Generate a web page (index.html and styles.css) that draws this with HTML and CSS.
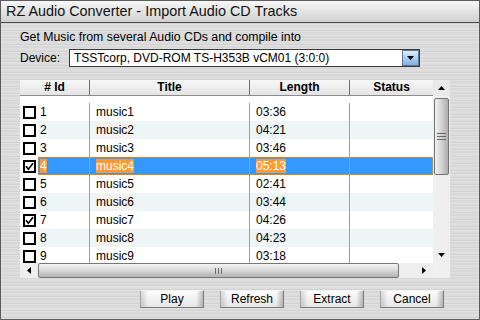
FILE: index.html
```html
<!DOCTYPE html>
<html lang="en">
<head>
    <meta charset="UTF-8">
    <title>RZ Audio Converter - Import Audio CD Tracks</title>
    <link rel="stylesheet" href="styles.css">
</head>
<body>
<div class="window">
    <div class="title_bar">RZ Audio Converter - Import Audio CD Tracks</div>
    <div class="content">
        <p class="intro">Get Music from several Audio CDs and compile into</p>
        <div class="device">
            <span class="device_label">Device:</span>
            <div class="combo">
                <span class="combo_text">TSSTcorp, DVD-ROM TS-H353B vCM01 (3:0:0)</span>
                <span class="combo_btn"><svg width="7" height="5" viewBox="0 0 7 5"><path d="M0 0h7l-3.5 4z" fill="#000"/></svg></span>
            </div>
        </div>

        <div class="track_table">
            <div class="list">
                <div class="thead">
                    <div class="th th_id"># Id</div>
                    <div class="th th_title">Title</div>
                    <div class="th th_len">Length</div>
                    <div class="th th_status">Status</div>
                </div>
                <div class="tbody">
                    <div class="row">
                        <div class="chk_cell"><span class="chk"></span></div>
                        <div class="cells"><div class="td td_id">1</div><div class="td td_title">music1</div><div class="td td_len">03:36</div><div class="td td_status"></div></div>
                    </div>
                    <div class="row alt">
                        <div class="chk_cell"><span class="chk"></span></div>
                        <div class="cells"><div class="td td_id">2</div><div class="td td_title"><span class="tint">music2</span></div><div class="td td_len">04:21</div><div class="td td_status"></div></div>
                    </div>
                    <div class="row">
                        <div class="chk_cell"><span class="chk"></span></div>
                        <div class="cells"><div class="td td_id">3</div><div class="td td_title">music3</div><div class="td td_len">03:46</div><div class="td td_status"></div></div>
                    </div>
                    <div class="row sel">
                        <div class="chk_cell"><span class="chk"><svg width="9" height="9" viewBox="0 0 9 9"><path d="M1 4.2l2.4 3 4.6-6" fill="none" stroke="#000" stroke-width="1.7"/></svg></span></div>
                        <div class="cells"><div class="td td_id"><span class="hl">4</span></div><div class="td td_title"><span class="hl">music4</span></div><div class="td td_len"><span class="hl">05:13</span></div><div class="td td_status"></div></div>
                    </div>
                    <div class="row">
                        <div class="chk_cell"><span class="chk"></span></div>
                        <div class="cells"><div class="td td_id">5</div><div class="td td_title">music5</div><div class="td td_len">02:41</div><div class="td td_status"></div></div>
                    </div>
                    <div class="row alt">
                        <div class="chk_cell"><span class="chk"></span></div>
                        <div class="cells"><div class="td td_id">6</div><div class="td td_title"><span class="tint">music6</span></div><div class="td td_len">03:44</div><div class="td td_status"></div></div>
                    </div>
                    <div class="row">
                        <div class="chk_cell"><span class="chk"><svg width="9" height="9" viewBox="0 0 9 9"><path d="M1 4.2l2.4 3 4.6-6" fill="none" stroke="#000" stroke-width="1.7"/></svg></span></div>
                        <div class="cells"><div class="td td_id">7</div><div class="td td_title">music7</div><div class="td td_len">04:26</div><div class="td td_status"></div></div>
                    </div>
                    <div class="row alt">
                        <div class="chk_cell"><span class="chk"></span></div>
                        <div class="cells"><div class="td td_id">8</div><div class="td td_title"><span class="tint">music8</span></div><div class="td td_len">04:23</div><div class="td td_status"></div></div>
                    </div>
                    <div class="row">
                        <div class="chk_cell"><span class="chk"></span></div>
                        <div class="cells"><div class="td td_id">9</div><div class="td td_title">music9</div><div class="td td_len">03:18</div><div class="td td_status"></div></div>
                    </div>
                </div>
            </div>

            <div class="vscroll">
                <div class="vs_up"><svg width="7" height="4" viewBox="0 0 7 4"><path d="M3.5 0l3.5 4h-7z" fill="#000"/></svg></div>
                <div class="vs_track">
                    <div class="vs_thumb"><svg width="9" height="7" viewBox="0 0 9 7"><path d="M0 0.5h9M0 3.5h9M0 6.5h9" stroke="#6a6a6a"/></svg></div>
                </div>
                <div class="vs_down"><svg width="7" height="4" viewBox="0 0 7 4"><path d="M0 0h7l-3.5 4z" fill="#000"/></svg></div>
            </div>

            <div class="hscroll">
                <div class="hs_left"><svg width="4" height="7" viewBox="0 0 4 7"><path d="M0 3.5l4-3.5v7z" fill="#000"/></svg></div>
                <div class="hs_thumb"><svg width="7" height="6" viewBox="0 0 7 6"><path d="M0.5 0v6M3.5 0v6M6.5 0v6" stroke="#6a6a6a"/></svg></div>
                <div class="hs_right"><svg width="4" height="7" viewBox="0 0 4 7"><path d="M4 3.5l-4-3.5v7z" fill="#000"/></svg></div>
            </div>
            <div class="corner"></div>
        </div>

        <div class="buttons">
            <button class="btn">Play</button>
            <button class="btn">Refresh</button>
            <button class="btn">Extract</button>
            <button class="btn">Cancel</button>
        </div>
    </div>
</div>
</body>
</html>
```

FILE: styles.css
```css
body{
    margin: 0;
}
.window{
    width: 480px;
    height: 320px;
    box-sizing: border-box;
    border: 1px solid #5c5c5c;
    overflow: hidden;
    font-family: "Liberation Sans", Arial, sans-serif;
    color: #000;
    background: repeating-linear-gradient(to bottom, #dcdcdc 0, #dcdcdc 1px, #d3d3d3 1px, #d3d3d3 2px, #e1e1e1 2px, #e1e1e1 3px, #d8d8d8 3px, #d8d8d8 5px, #dedede 5px, #dedede 7px);
}
.title_bar{
    height: 21px;
    line-height: 21px;
    padding-left: 5px;
    font-size: 14.4px;
    font-weight: normal;
    color: #111;
    border-bottom: 1px solid #4a4a4a;
    background: linear-gradient(#f7f7f7, #e2e2e2 55%, #d0d0d0);
}
.content{
    padding: 7px 0 0 19px;
}
.intro{
    margin: 0;
    height: 14px;
    font-size: 12.3px;
    line-height: 14px;
}
.device{
    display: flex;
    align-items: center;
    height: 18px;
    margin-top: 5px;
    font-size: 12px;
}
.device_label{
    width: 49px;
}
.combo{
    width: 351px;
    height: 18px;
    box-sizing: border-box;
    border: 1px solid #3a3a3a;
    background-color: #fff;
    display: flex;
    align-items: center;
}
.combo_text{
    flex: 1;
    padding-left: 4px;
}
.combo_btn{
    width: 17px;
    height: 16px;
    box-sizing: border-box;
    border: 1px solid #56779f;
    background: linear-gradient(#e2eefc, #a9c8ef 55%, #86aee2);
    display: flex;
    align-items: center;
    justify-content: center;
}

/* track list */
.track_table{
    width: 430px;
    margin-top: 13px;
    display: grid;
    grid-template-columns: 413px 17px;
    grid-template-rows: 183px 15px;
}
.list{
    background-color: #fff;
    overflow: hidden;
}
.thead{
    display: flex;
    height: 15px;
    border-bottom: 1px solid #8c8c8c;
    background: linear-gradient(#f8f8f8, #e4e4e4);
    font-size: 12px;
    font-weight: bold;
    line-height: 15px;
}
.th{
    box-sizing: border-box;
    text-align: center;
    border-right: 1px solid #6e6e6e;
}
.th_id{ width: 70px; }
.th_title{ width: 160px; }
.th_len{ width: 100px; }
.th_status{ width: 83px; border-right: 0; }

.tbody{
    padding-top: 7px;
}
.row{
    display: flex;
    height: 18px;
    line-height: 18px;
    font-size: 12px;
}
.cells{
    display: flex;
    flex: 1;
}
.row.alt .cells{
    background-color: #eef5f7;
}
.row.sel .cells{
    background-color: #3399ff;
    outline: 1px dotted #e8902e;
    outline-offset: -1px;
}
.chk_cell{
    width: 18px;
    background-color: #fff;
    display: flex;
    align-items: center;
}
.chk{
    width: 13px;
    height: 13px;
    box-sizing: border-box;
    margin-left: 3px;
    border: 2px solid #000;
    background-color: #fff;
    display: flex;
}
.td{
    height: 18px;
    box-sizing: border-box;
    border-right: 1px solid #8ea3ba;
    white-space: nowrap;
}
.td_id{ width: 52px; padding-left: 2px; }
.td_title{ width: 160px; padding-left: 6px; }
.td_len{ width: 100px; padding-left: 6px; }
.td_status{ width: 83px; border-right: 0; }
.hl{
    background-color: #ff9a33;
    color: #fff;
}
.tint{
    background-color: #f8f1ec;
}

/* scrollbars */
.vscroll{
    background-color: #efefef;
    display: flex;
    flex-direction: column;
}
.vs_up,.vs_down{
    height: 16px;
    display: flex;
    align-items: center;
    justify-content: center;
}
.vs_up{
    background-color: #e9e9e9;
}
.vs_track{
    flex: 1;
    padding: 2px 1px 0;
}
.vs_thumb{
    width: 15px;
    height: 77px;
    box-sizing: border-box;
    border: 1px solid #747474;
    border-radius: 2px;
    background: linear-gradient(to right, #f2f2f2, #d6d6d6 45%, #aeaeae);
    display: flex;
    align-items: center;
    justify-content: center;
}
.hscroll{
    display: flex;
    align-items: center;
    background-color: #eeeeee;
}
.hs_left{
    width: 18px;
    display: flex;
    justify-content: center;
}
.hs_thumb{
    width: 361px;
    height: 15px;
    box-sizing: border-box;
    border: 1px solid #777;
    border-radius: 2px;
    background: linear-gradient(#f4f4f4, #d8d8d8 50%, #b2b2b2);
    display: flex;
    align-items: center;
    justify-content: center;
}
.hs_right{
    flex: 1;
    display: flex;
    justify-content: flex-end;
    padding-right: 7px;
}
.corner{
    background-color: #f0f0f0;
}

/* buttons */
.buttons{
    display: flex;
    justify-content: flex-end;
    gap: 16px;
    margin-top: 12px;
    padding-right: 35px;
}
.btn{
    width: 64px;
    height: 18px;
    box-sizing: border-box;
    padding: 0;
    border: 1px solid;
    border-color: #f4f4f4 #7c7c7c #7c7c7c #a6a6a6;
    background: linear-gradient(to right, rgba(0,0,0,0.14), rgba(0,0,0,0) 7px, rgba(0,0,0,0) 55px, rgba(0,0,0,0.24)), linear-gradient(#fdfdfd, #e6e6e6);
    font-family: "Liberation Sans", Arial, sans-serif;
    font-size: 12px;
    line-height: 16px;
    color: #000;
    text-align: center;
}
```
